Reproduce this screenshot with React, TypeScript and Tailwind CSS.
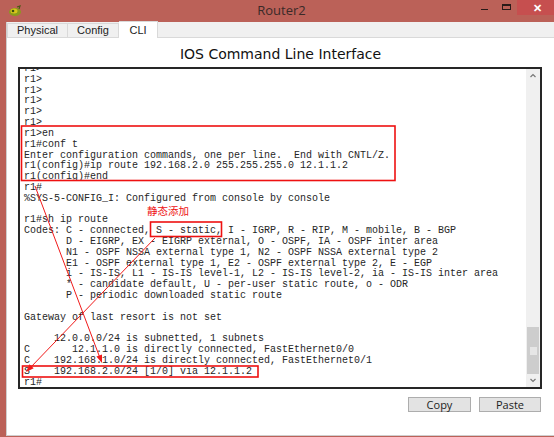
const lines = [
  "r1>",
  "r1>",
  "r1>",
  "r1>",
  "r1>",
  "r1>",
  "r1>en",
  "r1#conf t",
  "Enter configuration commands, one per line.  End with CNTL/Z.",
  "r1(config)#ip route 192.168.2.0 255.255.255.0 12.1.1.2",
  "r1(config)#end",
  "r1#",
  "%SYS-5-CONFIG_I: Configured from console by console",
  "",
  "r1#sh ip route",
  "Codes: C - connected, S - static, I - IGRP, R - RIP, M - mobile, B - BGP",
  "       D - EIGRP, EX - EIGRP external, O - OSPF, IA - OSPF inter area",
  "       N1 - OSPF NSSA external type 1, N2 - OSPF NSSA external type 2",
  "       E1 - OSPF external type 1, E2 - OSPF external type 2, E - EGP",
  "       i - IS-IS, L1 - IS-IS level-1, L2 - IS-IS level-2, ia - IS-IS inter area",
  "       * - candidate default, U - per-user static route, o - ODR",
  "       P - periodic downloaded static route",
  "",
  "Gateway of last resort is not set",
  "",
  "     12.0.0.0/24 is subnetted, 1 subnets",
  "C       12.1.1.0 is directly connected, FastEthernet0/0",
  "C    192.168.1.0/24 is directly connected, FastEthernet0/1",
  "S    192.168.2.0/24 [1/0] via 12.1.1.2",
  "r1#",
];

function TitleBar() {
  return (
    <div className="relative flex h-[22px] shrink-0 items-center">
      <svg width="14" height="12" viewBox="0 0 14 12" className="ml-[8px]">
        <ellipse cx="7" cy="7" rx="6" ry="4" fill="#8a9a1c" />
        <ellipse cx="6" cy="6" rx="3.5" ry="2.5" fill="#d6c61a" />
        <circle cx="5" cy="6" r="1.3" fill="#3b4a12" />
        <path d="M9 2 L12 1 L11 4" fill="none" stroke="#4a5a14" strokeWidth="1.2" />
      </svg>
      <div className="flex-1 pl-[68px] text-center font-['Open_Sans',sans-serif] text-[13px] text-[#3a2a28]">
        Router2
      </div>
      <div className="flex h-full items-start">
        <div className="flex h-[15px] w-[22px] items-center justify-center">
          <div className="mt-[3px] h-[1px] w-[7px] bg-[#2a1a18]" />
        </div>
        <div className="flex h-[15px] w-[22px] items-center justify-center">
          <div className="mb-[2px] h-[6px] w-[9px] border border-t-2 border-[#2a1a18]" />
        </div>
        <div className="flex h-[15px] w-[37px] items-center justify-center bg-[#c64f4f] pl-[3px] text-[11px] font-bold leading-none text-white">
          ✕
        </div>
      </div>
    </div>
  );
}

function Tabs() {
  return (
    <div className="flex h-[16px] shrink-0 items-end border-b border-[#d9d9d9] bg-[#f0f0f0] font-['Liberation_Sans',sans-serif] text-[11px] text-[#222]">
      <div className="flex h-[14px] w-[61px] items-center justify-center border border-b-0 border-[#d9d9d9] bg-[#f0f0f0]">
        Physical
      </div>
      <div className="flex h-[14px] w-[51px] items-center justify-center border border-b-0 border-l-0 border-[#d9d9d9] bg-[#f0f0f0]">
        Config
      </div>
      <div className="-mb-[1px] flex h-[17px] w-[39px] items-center justify-center border border-b-0 border-l-0 border-[#d9d9d9] bg-white">
        CLI
      </div>
    </div>
  );
}

function Scrollbar() {
  return (
    <div className="flex w-[14px] shrink-0 flex-col items-center bg-[#f0f0f0] pb-[1px]">
      <svg width="8" height="14" viewBox="0 0 8 14">
        <path d="M1.5 8 L4 5.5 L6.5 8" fill="none" stroke="#777" strokeWidth="1.2" />
      </svg>
      <div className="flex-1" />
      <div className="flex h-[47px] w-[12px] items-center justify-center bg-[#cdcdcd]">
        <div className="h-[8px] w-[7px] bg-[#e6e6e6]" />
      </div>
      <svg width="8" height="12" viewBox="0 0 8 12">
        <path d="M1.5 5 L4 7.5 L6.5 5" fill="none" stroke="#777" strokeWidth="1.2" />
      </svg>
    </div>
  );
}

function Terminal() {
  return (
    <div className="ml-[11px] mr-[12px] mt-[3px] flex h-[322px] border-2 border-[#262626] bg-white">
      <div className="flex-1 overflow-hidden pl-[4px]">
        <div className="mt-[-5px] whitespace-pre font-['Liberation_Mono',monospace] text-[10px] leading-[10.82px] text-[#262626]">
          {lines.map((l, i) => (
            <div key={i} className="h-[10.82px]">
              {l}
            </div>
          ))}
        </div>
      </div>
      <Scrollbar />
    </div>
  );
}

function Annotations() {
  return (
    <div className="pointer-events-none absolute inset-0">
      <svg width="554" height="437" className="absolute left-0 top-0">
        <g fill="none" stroke="#ee1111" strokeWidth="1.6">
          <rect x="21.5" y="126" width="373.5" height="54.5" />
          <rect x="150.5" y="222" width="71" height="14.5" />
          <rect x="22.5" y="366" width="235.5" height="11" />
        </g>
        <g stroke="#f01a1a" strokeWidth="1">
          <line x1="35" y1="186" x2="100" y2="358" />
          <line x1="155" y1="238" x2="30" y2="368" />
        </g>
        <g fill="#f01a1a">
          <polygon points="102,363 96.4,356.6 102,354.5" />
          <polygon points="26,372 29.4,364.2 33.7,368.3" />
        </g>
      </svg>
      <div className="absolute left-[147px] top-[204px] font-['Noto_Sans_CJK_SC',sans-serif] text-[10.5px] leading-[13px] text-[#ee1111]">
        静态添加
      </div>
    </div>
  );
}

export default function App() {
  return (
    <div className="relative flex h-[437px] w-[554px] flex-col overflow-hidden bg-[#bb6158]">
      <TitleBar />
      <div className="ml-[6px] mb-[1px] flex flex-1 flex-col border-b border-l border-[#cfcfcf] bg-white">
        <Tabs />
        <div className="flex flex-1 flex-col">
          <div className="pt-[6px] text-center font-['DejaVu_Sans',sans-serif] text-[14px] leading-[20px] text-[#111]">
            IOS Command Line Interface
          </div>
          <Terminal />
          <div className="mr-[13px] mt-[8px] flex justify-end gap-[8px] font-['Open_Sans',sans-serif] text-[11px] text-[#222]">
            <button className="h-[15px] w-[63px] border border-[#adadad] bg-[#e3e3e3] leading-[13px]">
              Copy
            </button>
            <button className="h-[15px] w-[62px] border border-[#adadad] bg-[#e3e3e3] leading-[13px]">
              Paste
            </button>
          </div>
        </div>
      </div>
      <Annotations />
    </div>
  );
}
